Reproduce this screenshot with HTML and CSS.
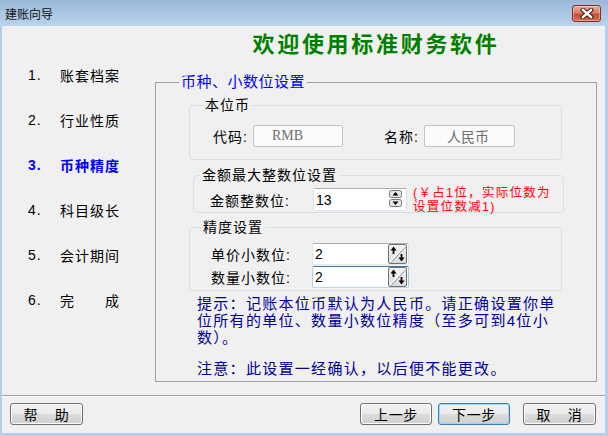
FILE: index.html
```html
<!DOCTYPE html>
<html lang="zh-CN">
<head>
    <meta charset="UTF-8">
    <title>建账向导</title>
    <link rel="stylesheet" href="styles.css">
</head>
<body>
<div class="window">
    <!-- Title bar -->
    <div class="titlebar">
        <span class="title">建账向导</span>
        <span class="close-btn">
            <svg width="14" height="11" viewBox="0 0 14 11">
                <path d="M3 2 L11 9 M11 2 L3 9" stroke="#4a1a12" stroke-width="4.5" stroke-linecap="square"/>
                <path d="M3 2 L11 9 M11 2 L3 9" stroke="#ffffff" stroke-width="2.4" stroke-linecap="square"/>
            </svg>
        </span>
    </div>

    <div class="frame">
        <div class="content">
            <!-- Wizard steps -->
            <ul class="steps">
                <li><span class="num">1.</span><span class="name">账套档案</span></li>
                <li><span class="num">2.</span><span class="name">行业性质</span></li>
                <li class="current"><span class="num">3.</span><span class="name">币种精度</span></li>
                <li><span class="num">4.</span><span class="name">科目级长</span></li>
                <li><span class="num">5.</span><span class="name">会计期间</span></li>
                <li><span class="num">6.</span><span class="name spread"><span>完</span><span>成</span></span></li>
            </ul>

            <!-- Step page -->
            <div class="main">
                <h1 class="welcome">欢迎使用标准财务软件</h1>

                <fieldset class="panel">
                    <legend>币种、小数位设置</legend>

                    <fieldset class="group group-currency">
                        <legend>本位币</legend>
                        <div class="row row-currency">
                            <span class="label">代码:</span>
                            <div class="field field-ro field-code">RMB</div>
                            <span class="label label-name">名称:</span>
                            <div class="field field-ro field-name">人民币</div>
                        </div>
                    </fieldset>

                    <fieldset class="group group-max">
                        <legend>金额最大整数位设置</legend>
                        <div class="row row-max">
                            <span class="label">金额整数位:</span>
                            <div class="field field-max">
                                <span>13</span>
                                <span class="spin-pair">
                                    <svg width="13" height="8" viewBox="0 0 13 8">
                                        <rect x="0.5" y="0.5" width="12" height="7" rx="2" fill="#e6e6e6" stroke="#777"/>
                                        <path d="M3.5 5.5 L6.5 2 L9.5 5.5 Z" fill="#000"/>
                                    </svg>
                                    <svg width="13" height="8" viewBox="0 0 13 8">
                                        <rect x="0.5" y="0.5" width="12" height="7" rx="2" fill="#e6e6e6" stroke="#777"/>
                                        <path d="M3.5 2.5 L6.5 6 L9.5 2.5 Z" fill="#000"/>
                                    </svg>
                                </span>
                            </div>
                            <span class="note">(￥占1位，实际位数为<br>设置位数减1)</span>
                        </div>
                    </fieldset>

                    <fieldset class="group group-precision">
                        <legend>精度设置</legend>
                        <div class="row row-precision">
                            <span class="label">单价小数位:</span>
                            <div class="field field-digit">
                                <span>2</span>
                                <span class="spin-btn">
                                    <svg width="19" height="20" viewBox="0 0 19 20">
                                        <line x1="2" y1="18" x2="17" y2="2" stroke="#fff" stroke-width="1.5"/>
                                        <line x1="3" y1="18.5" x2="17.5" y2="3" stroke="#8a8a8a"/>
                                        <path d="M5.5 2.5 L2.5 6.5 H4.6 V10 H6.4 V6.5 H8.5 Z" fill="#000"/>
                                        <path d="M13.5 17.5 L10.5 13.5 H12.6 V10 H14.4 V13.5 H16.5 Z" fill="#000"/>
                                    </svg>
                                </span>
                            </div>
                        </div>
                        <div class="row row-precision">
                            <span class="label">数量小数位:</span>
                            <div class="field field-digit field-focus">
                                <span>2</span>
                                <span class="spin-btn">
                                    <svg width="19" height="20" viewBox="0 0 19 20">
                                        <line x1="2" y1="18" x2="17" y2="2" stroke="#fff" stroke-width="1.5"/>
                                        <line x1="3" y1="18.5" x2="17.5" y2="3" stroke="#8a8a8a"/>
                                        <path d="M5.5 2.5 L2.5 6.5 H4.6 V10 H6.4 V6.5 H8.5 Z" fill="#000"/>
                                        <path d="M13.5 17.5 L10.5 13.5 H12.6 V10 H14.4 V13.5 H16.5 Z" fill="#000"/>
                                    </svg>
                                </span>
                            </div>
                        </div>
                    </fieldset>

                    <p class="hint">提示：记账本位币默认为人民币。请正确设置你单<br>位所有的单位、数量小数位精度（至多可到4位小<br>数）。</p>
                    <p class="hint hint-note">注意：此设置一经确认，以后便不能更改。</p>
                </fieldset>
            </div>
        </div>

        <div class="separator"></div>

        <!-- Buttons -->
        <div class="footer">
            <button class="btn btn-help"><span class="spread spread-btn"><span>帮</span><span>助</span></span></button>
            <button class="btn btn-prev">上一步</button>
            <button class="btn btn-next">下一步</button>
            <button class="btn btn-cancel"><span class="spread spread-btn"><span>取</span><span>消</span></span></button>
        </div>
    </div>
</div>
</body>
</html>
```

FILE: styles.css
```css
/* Reset */
* {
    margin: 0;
    padding: 0;
    box-sizing: border-box;
}

body {
    font-family: "Liberation Sans", "Noto Sans CJK SC", sans-serif;
    font-size: 14px;
    color: #000;
    background: #fff;
}

/* Window */
.window {
    width: 608px;
    height: 436px;
    display: flex;
    flex-direction: column;
}

.titlebar {
    height: 26px;
    display: flex;
    align-items: center;
    justify-content: space-between;
    padding: 0 7px 0 5px;
    background: linear-gradient(#9bb8d9, #bad3ed);
}

.title {
    font-size: 12px;
    color: #111;
}

.close-btn {
    width: 29px;
    height: 17px;
    display: flex;
    align-items: center;
    justify-content: center;
    border: 1px solid #7a3027;
    border-radius: 3px;
    background: linear-gradient(#e9aa9a 0%, #d8826d 45%, #c4502f 55%, #d46c4f 100%);
    box-shadow: inset 0 0 0 1px rgba(255, 255, 255, 0.35);
}

.frame {
    flex: 1;
    display: flex;
    flex-direction: column;
    background: #f0f0f0;
    border: solid #b5cfea;
    border-width: 0 3px 3px 2px;
}

.content {
    height: 356px;
    display: flex;
}

/* Steps list */
.steps {
    width: 153px;
    list-style: none;
    padding-top: 26px;
}

.steps li {
    height: 45px;
    display: flex;
    align-items: center;
    letter-spacing: 1px;
}

.steps li.current {
    color: #0000ff;
    font-weight: bold;
}

.num {
    width: 58px;
    padding-left: 26px;
}

.spread {
    width: 60px;
    display: flex;
    justify-content: space-between;
}

/* Main page */
.main {
    flex: 1;
    margin-right: 8px;
    display: flex;
    flex-direction: column;
}

.welcome {
    margin: 4px 0 12px;
    height: 30px;
    line-height: 30px;
    text-align: center;
    font-size: 22px;
    letter-spacing: 2.7px;
    color: #008000;
    font-weight: bold;
}

.panel {
    flex: 1;
    min-width: 0;
    border: 1px solid #a0a0a0;
}

.panel > legend {
    margin-left: 23px;
    padding: 0 2px;
    font-size: 15px;
    line-height: 20px;
    letter-spacing: 0.5px;
    color: #0000ff;
}

.group {
    min-width: 0;
    border: 1px solid #d5dfe5;
    border-radius: 4px;
}

.group > legend {
    padding: 0 2px;
    line-height: 20px;
    letter-spacing: 1px;
}

.group-currency {
    margin: 3px 34px 0 33px;
    padding: 10px 0 12px;
}

.group-currency > legend {
    margin-left: 13px;
}

.group-max {
    margin: 5px 32px 0 37px;
    padding: 3px 0 1px;
}

.group-max > legend {
    margin-left: 6px;
}

.group-precision {
    margin: 4px 34px 0 33px;
    padding: 6px 0 2px;
}

.group-precision > legend {
    margin-left: 11px;
}

.row {
    display: flex;
    align-items: center;
}

.label {
    letter-spacing: 1px;
}

.row-currency {
    height: 22px;
    padding-left: 23px;
}

.row-currency .label {
    width: 40px;
}

.row-currency .label-name {
    margin-left: 41px;
}

.row-max {
    height: 23px;
    padding-left: 16px;
}

.row-max .label {
    width: 103px;
}

.row-precision {
    height: 22px;
    padding-left: 21px;
}

.row-precision + .row-precision {
    margin-top: 1px;
}

.row-precision .label {
    width: 101px;
}

/* Text fields */
.field {
    height: 22px;
    display: flex;
    align-items: center;
    padding-left: 2px;
    background: #fff;
    border: 1px solid;
    border-color: #abadb3 #dbdfe6 #e3e9ef #e2e3ea;
    border-radius: 2px;
}

.field-ro {
    color: #6d6d6d;
    background: #fbfbfb;
    border-color: #c3c3c3;
}

.field-code {
    width: 90px;
    padding-left: 18px;
    font-family: "Liberation Serif", serif;
}

.field-name {
    width: 91px;
    padding-left: 22px;
}

.field-max {
    width: 94px;
    height: 23px;
    justify-content: space-between;
    padding-right: 4px;
}

.spin-pair {
    display: flex;
    flex-direction: column;
    gap: 1px;
    margin-top: -2px;
}

.spin-pair svg {
    display: block;
}

.field-digit {
    width: 97px;
    justify-content: space-between;
    padding-right: 1px;
}

.field-focus {
    border-color: #3d7bad #a4c9e3 #b7d9ed #b5cfe7;
}

.spin-btn {
    width: 19px;
    height: 20px;
    border: 1px solid #707070;
    border-radius: 2px;
    background: linear-gradient(#f3f3f3, #dcdcdc);
    display: flex;
    align-items: center;
    justify-content: center;
}

.spin-btn svg {
    display: block;
    flex: none;
}

.note {
    margin-left: 6px;
    font-size: 12.5px;
    line-height: 14px;
    letter-spacing: 1.3px;
    color: #ff0000;
}

/* Hints */
.hint {
    margin: 4px 0 0 41px;
    font-size: 15px;
    line-height: 17px;
    letter-spacing: 1.3px;
    color: #000099;
}

.hint-note {
    margin-top: 14px;
}

/* Bottom bar */
.separator {
    margin-top: 13px;
    border-top: 1px solid #a0a0a0;
    border-bottom: 1px solid #fff;
}

.footer {
    display: flex;
    padding: 6px 9px 8px 8px;
}

.btn {
    width: 72px;
    height: 22px;
    display: flex;
    align-items: center;
    justify-content: center;
    font-family: "Liberation Sans", "Noto Sans CJK SC", sans-serif;
    font-size: 14px;
    letter-spacing: 0.7px;
    color: #000;
    border: 1px solid #707070;
    border-radius: 3px;
    background: linear-gradient(#f2f2f2 0%, #ebebeb 50%, #dddddd 50%, #cfcfcf 100%);
    box-shadow: inset 0 0 0 1px #fcfcfc;
}

.btn-help {
    width: 73px;
    margin-right: auto;
}

.btn-next {
    margin-left: 6px;
    border-color: #3c7fb1;
    box-shadow: inset 0 0 0 1px #9fd6f5;
}

.btn-cancel {
    width: 73px;
    margin-left: 13px;
}

.spread-btn {
    width: 46px;
}
```
